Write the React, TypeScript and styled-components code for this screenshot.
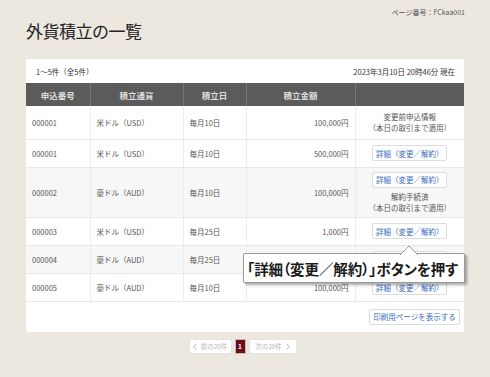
import React from 'react';
import styled, { createGlobalStyle } from 'styled-components';

const GlobalStyle = createGlobalStyle`
    html, body {
        margin: 0;
        padding: 0;
        background: #ece8df;
    }
    body {
        font-family: "Noto Sans CJK JP", "Noto Sans", sans-serif;
        color: #444;
    }
`;

const Page = styled.div`
    position: relative;
    width: 490px;
    height: 377px;
    overflow: hidden;
    padding: 0 26px;
    box-sizing: border-box;
`;

const PageNo = styled.div`
    text-align: right;
    font-size: 7px;
    line-height: 10px;
    color: #555;
    padding-top: 7px;
    margin-right: -1px;
`;

const Title = styled.h1`
    margin: 1px 0 0;
    font-size: 17px;
    line-height: 26px;
    font-weight: normal;
    color: #222;
    letter-spacing: -0.5px;
`;

const Card = styled.div`
    margin-top: 15px;
    background: #fff;
    border-radius: 2px;
`;

const CardHead = styled.div`
    display: flex;
    justify-content: space-between;
    align-items: center;
    height: 24px;
    padding: 0 9px 0 10px;
    font-size: 7.5px;
    color: #333;
`;

const Table = styled.table`
    width: 100%;
    border-collapse: collapse;
    table-layout: fixed;
`;

const Th = styled.th`
    background: #5b5b5b;
    color: #dedede;
    font-size: 8.5px;
    font-weight: bold;
    height: 23px;
    padding: 0;
    border-left: 1px solid #777;
    &:first-child {
        border-left: none;
    }
`;

const Tr = styled.tr<{ $h: number; $gray?: boolean }>`
    height: ${p => p.$h}px;
    background: ${p => (p.$gray ? '#f7f7f7' : '#fff')};
    border-bottom: 1px solid #e8e8e8;
`;

const Td = styled.td<{ $align?: 'left' | 'right' | 'center' }>`
    font-size: 7.5px;
    line-height: 11px;
    color: #555;
    padding: 0 6px;
    text-align: ${p => p.$align || 'left'};
    border-left: 1px solid #ececec;
    vertical-align: middle;
    &:first-child {
        border-left: none;
    }
`;

const Note = styled.div`
    color: #555;
    font-size: 7.5px;
    line-height: 11px;
`;

const DetailButton = styled.div<{ $mb?: number }>`
    display: inline-flex;
    align-items: center;
    justify-content: center;
    width: 75px;
    height: 16px;
    box-sizing: border-box;
    border: 1px solid #dcdcdc;
    border-radius: 2px;
    background: #fff;
    color: #3b6cc2;
    font-size: 7.5px;
    margin-bottom: ${p => p.$mb || 0}px;
`;

const CardFoot = styled.div`
    display: flex;
    justify-content: flex-end;
    padding: 7px 4px 7px 0;
`;

const PrintButton = styled.div`
    display: flex;
    align-items: center;
    justify-content: center;
    width: 91px;
    height: 16px;
    box-sizing: border-box;
    border: 1px solid #dcdcdc;
    border-radius: 2px;
    color: #3b6cc2;
    font-size: 7.5px;
`;

const Pager = styled.div`
    display: flex;
    justify-content: center;
    gap: 3px;
    margin-top: 7px;
    margin-left: -5px;
`;

const PageButton = styled.div<{ $w: number }>`
    display: flex;
    align-items: center;
    justify-content: center;
    gap: 4px;
    width: ${p => p.$w}px;
    height: 15px;
    box-sizing: border-box;
    background: #fff;
    border: 1px solid #e4e4e4;
    border-radius: 2px;
    color: #b5b5b5;
    font-size: 6.5px;
`;

const Current = styled.div`
    display: flex;
    align-items: center;
    justify-content: center;
    width: 11px;
    height: 15px;
    box-sizing: border-box;
    background: #6a0e1e;
    border: 1px solid #c9b9a8;
    color: #fff;
    font-size: 6.5px;
    font-weight: bold;
`;

const Callout = styled.div`
    position: absolute;
    left: 243px;
    top: 253px;
    width: 222px;
    height: 30px;
    box-sizing: border-box;
    background: #fff;
    border: 1px solid #9a9a9a;
    border-radius: 2px;
    box-shadow: 2px 2px 3px rgba(0, 0, 0, 0.35);
    display: flex;
    align-items: center;
    padding-left: 3px;
    font-size: 14.5px;
    font-weight: bold;
    color: #1a1a1a;
    font-feature-settings: "palt";
    letter-spacing: -0.1px;
    white-space: nowrap;
`;

const Arrow = styled.svg`
    position: absolute;
    left: 156px;
    top: -9px;
`;

const Chevron = ({ dir }: { dir: 'l' | 'r' }) => (
    <svg width="4" height="7" viewBox="0 0 4 7">
        <path
            d={dir === 'l' ? 'M3.5 0.5 L0.8 3.5 L3.5 6.5' : 'M0.5 0.5 L3.2 3.5 L0.5 6.5'}
            fill="none"
            stroke="#aaa"
            strokeWidth="0.9"
        />
    </svg>
);

type Row = {
    no: string;
    currency: string;
    day: string;
    amount: string;
    h: number;
    gray?: boolean;
    action: 'info' | 'button' | 'cancelled';
};

const rows: Row[] = [
    { no: '000001', currency: '米ドル（USD）', day: '毎月10日', amount: '100,000円', h: 33, action: 'info' },
    { no: '000001', currency: '米ドル（USD）', day: '毎月10日', amount: '500,000円', h: 28, action: 'button' },
    { no: '000002', currency: '豪ドル（AUD）', day: '毎月10日', amount: '100,000円', h: 50, gray: true, action: 'cancelled' },
    { no: '000003', currency: '米ドル（USD）', day: '毎月25日', amount: '1,000円', h: 28, action: 'button' },
    { no: '000004', currency: '豪ドル（AUD）', day: '毎月25日', amount: '', h: 28, gray: true, action: 'button' },
    { no: '000005', currency: '豪ドル（AUD）', day: '毎月10日', amount: '100,000円', h: 28, action: 'button' },
];

const renderAction = (a: Row['action']) => {
    if (a === 'info') {
        return (
            <>
                <Note>変更前申込情報</Note>
                <Note>（本日の取引まで適用）</Note>
            </>
        );
    }
    if (a === 'cancelled') {
        return (
            <>
                <DetailButton $mb={3}>詳細（変更／解約）</DetailButton>
                <Note>解約手続済</Note>
                <Note>（本日の取引まで適用）</Note>
            </>
        );
    }
    return <DetailButton>詳細（変更／解約）</DetailButton>;
};

const App = () => {
    return (
        <Page>
            <GlobalStyle />
            <PageNo>ページ番号：FCkaa001</PageNo>
            <Title>外貨積立の一覧</Title>
            <Card>
                <CardHead>
                    <span>1～5件（全5件）</span>
                    <span>2023年3月10日 20時46分 現在</span>
                </CardHead>
                <Table>
                    <colgroup>
                        <col style={{ width: 64 }} />
                        <col style={{ width: 93 }} />
                        <col style={{ width: 63 }} />
                        <col style={{ width: 109 }} />
                        <col style={{ width: 109 }} />
                    </colgroup>
                    <thead>
                        <tr>
                            <Th>申込番号</Th>
                            <Th>積立通貨</Th>
                            <Th>積立日</Th>
                            <Th>積立金額</Th>
                            <Th></Th>
                        </tr>
                    </thead>
                    <tbody>
                        {rows.map((r, i) => (
                            <Tr key={i} $h={r.h} $gray={r.gray}>
                                <Td>{r.no}</Td>
                                <Td>{r.currency}</Td>
                                <Td>{r.day}</Td>
                                <Td $align="right">{r.amount}</Td>
                                <Td $align="center">{renderAction(r.action)}</Td>
                            </Tr>
                        ))}
                    </tbody>
                </Table>
                <CardFoot>
                    <PrintButton>印刷用ページを表示する</PrintButton>
                </CardFoot>
            </Card>
            <Pager>
                <PageButton $w={43}>
                    <Chevron dir="l" />
                    前の20件
                </PageButton>
                <Current>1</Current>
                <PageButton $w={48}>
                    次の20件
                    <Chevron dir="r" />
                </PageButton>
            </Pager>
            <Callout>
                <Arrow width="18" height="10" viewBox="0 0 18 10">
                    <path d="M0 10 L9 1 L18 10" fill="#fff" stroke="#9a9a9a" strokeWidth="1" />
                </Arrow>
                「詳細（変更／解約）」ボタンを押す
            </Callout>
        </Page>
    );
};

export default App;
